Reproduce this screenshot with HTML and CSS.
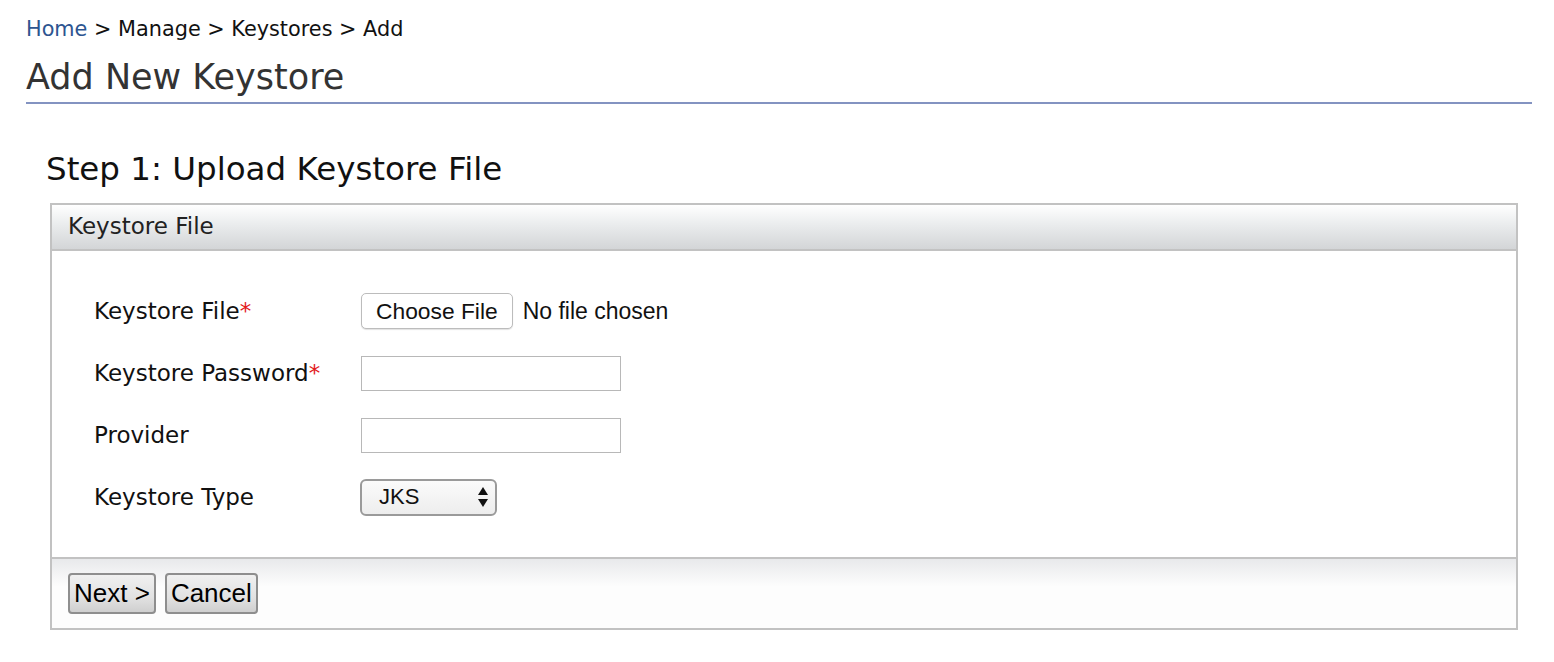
FILE: index.html
```html
<!DOCTYPE html>
<html>
<head>
<meta charset="utf-8">
<link rel="stylesheet" href="styles.css">
</head>
<body>
<div class="page">
  <div class="breadcrumb"><a class="crumb-link" href="#">Home</a> &gt; Manage &gt; Keystores &gt; Add</div>
  <h1 class="page-title">Add New Keystore</h1>
  <div class="content">
    <h2 class="step-title">Step 1: Upload Keystore File</h2>
    <div class="panel">
      <div class="panel-head">Keystore File</div>
      <div class="panel-body">
        <div class="form-row">
          <div class="label">Keystore File<span class="req">*</span></div>
          <div class="field file-field"><span class="file-btn">Choose File</span><span class="file-text">No file chosen</span></div>
        </div>
        <div class="form-row">
          <div class="label">Keystore Password<span class="req">*</span></div>
          <div class="field"><span class="text-input"></span></div>
        </div>
        <div class="form-row">
          <div class="label">Provider</div>
          <div class="field"><span class="text-input"></span></div>
        </div>
        <div class="form-row">
          <div class="label">Keystore Type</div>
          <div class="field"><span class="select">JKS<svg class="arrows" width="12" height="24" viewBox="0 0 12 24"><path d="M6 2 L11 10 L1 10 Z" fill="#111"/><path d="M6 22 L11 14 L1 14 Z" fill="#111"/></svg></span></div>
        </div>
      </div>
      <div class="panel-foot">
        <span class="btn">Next &gt;</span><span class="btn">Cancel</span>
      </div>
    </div>
  </div>
</div>
</body>
</html>
```
FILE: styles.css
```css
html, body { margin: 0; padding: 0; background: #fff; }
body { font-family: "DejaVu Sans", sans-serif; color: #111; }
.page { padding: 15px 22px 0 26px; }
.breadcrumb { font-size: 20.8px; line-height: 28px; color: #111; }
.crumb-link { color: #2d5590; text-decoration: none; }
.page-title { margin: 0; font-weight: normal; font-size: 35px; line-height: 44px; color: #333; padding: 12px 0 3px; border-bottom: 2px solid #8393c1; }
.content { padding: 0 14px 0 20px; }
.step-title { margin: 0; font-weight: normal; font-size: 32.5px; line-height: 40px; color: #111; padding: 45px 0 14px; }
.panel { margin-left: 4px; border: 2px solid #c2c2c2; }
.panel-head { height: 44px; line-height: 42px; padding-left: 16px; font-size: 23px; color: #222; background: linear-gradient(#ffffff, #eceeef 40%, #d3d5d7); border-bottom: 2px solid #c2c2c2; }
.panel-body { padding: 42px 42px 42px; display: flex; flex-direction: column; gap: 26px; }
.form-row { display: flex; align-items: center; height: 36px; }
.label { width: 267px; font-size: 23px; color: #111; }
.req { color: #e21b1b; }
.field { display: flex; align-items: center; }
.file-btn { font-family: "Liberation Sans", sans-serif; font-size: 22.8px; color: #111; border: 1px solid #bcbcbc; border-radius: 5px; background: #fff; height: 34px; line-height: 34px; padding: 0 14px; box-shadow: 0 1px 1px rgba(0,0,0,0.12); }
.file-text { font-family: "Liberation Sans", sans-serif; font-size: 23px; margin-left: 10px; color: #111; }
.text-input { display: block; width: 258px; height: 33px; border: 1px solid #b8b8b8; background: #fff; }
.select { position: relative; display: flex; align-items: center; justify-content: space-between; box-sizing: border-box; width: 137px; height: 37px; margin-left: -1px; padding: 0 6px 0 17px; border: 2px solid #9a9a9a; border-radius: 6px; background: linear-gradient(#fbfbfb, #ededed); font-family: "Liberation Sans", sans-serif; font-size: 22px; color: #111; }
.arrows { display: block; }
.panel-foot { border-top: 2px solid #c2c2c2; background: linear-gradient(#e8e9eb, #fdfdfd 40%, #fdfdfd); padding: 14px 16px 14px; display: flex; gap: 9px; }
.btn { font-family: "Liberation Sans", sans-serif; font-size: 26px; color: #000; height: 37px; line-height: 37px; padding: 0 4px; border: 2px solid #8e8e8e; border-radius: 4px; background: linear-gradient(#f0f0f0, #e2e2e2 60%, #cfcfcf); }
```
